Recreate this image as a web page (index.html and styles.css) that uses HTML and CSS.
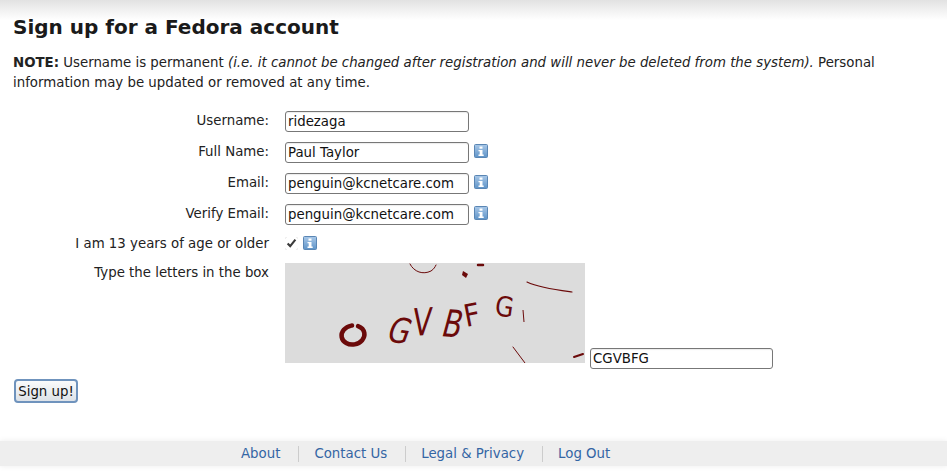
FILE: index.html
```html
<!DOCTYPE html>
<html lang="en">
<head>
<meta charset="utf-8">
<title>Sign up for a Fedora account</title>
<link rel="stylesheet" href="styles.css">
</head>
<body>
<svg width="0" height="0" class="defs" aria-hidden="true">
  <defs>
    <linearGradient id="ig" x1="0" y1="0" x2="0" y2="1">
      <stop offset="0" stop-color="#a9c8e8"/>
      <stop offset="1" stop-color="#5f94c8"/>
    </linearGradient>
    <symbol id="info" viewBox="0 0 14 14">
      <rect x="0.5" y="0.5" width="13" height="13" rx="1" fill="url(#ig)" stroke="#5a86b4"/>
      <rect x="5.5" y="2.5" width="3" height="2.2" fill="#fff"/>
      <path d="M4.5 6h4v4.6h1.2v1.4H4.5v-1.4h1.2V7.3H4.5z" fill="#fff"/>
    </symbol>
  </defs>
</svg>
<main class="content">
  <h1 class="title">Sign up for a Fedora account</h1>
  <p class="note"><strong>NOTE:</strong> Username is permanent <em>(i.e. it cannot be changed after registration and will never be deleted from the system).</em> Personal information may be updated or removed at any time.</p>
  <form class="form">
    <label class="label">Username:</label>
    <div class="field"><input class="text" type="text" value="ridezaga"></div>
    <label class="label">Full Name:</label>
    <div class="field"><input class="text" type="text" value="Paul Taylor"><svg class="info"><use href="#info"/></svg></div>
    <label class="label">Email:</label>
    <div class="field"><input class="text" type="text" value="penguin@kcnetcare.com"><svg class="info"><use href="#info"/></svg></div>
    <label class="label">Verify Email:</label>
    <div class="field"><input class="text" type="text" value="penguin@kcnetcare.com"><svg class="info"><use href="#info"/></svg></div>
    <label class="label label-check">I am 13 years of age or older</label>
    <div class="field field-check"><input class="check" type="checkbox" checked><svg class="info"><use href="#info"/></svg></div>
    <label class="label label-captcha">Type the letters in the box</label>
    <div class="field field-captcha">
      <svg class="captcha" width="300" height="100" viewBox="0 0 300 100">
        <rect width="300" height="100" fill="#dcdcdc"/>
        <g fill="none" stroke="#6b0a0a" stroke-linecap="round">
          <path d="M125 1C129 9 138 12 146 8 149 6 150 4 151 2" stroke-width="1"/>
          <path d="M242 19C255 25 272 27 287 29" stroke-width="1.2"/>
          <path d="M228 84L240 100" stroke-width="1"/>
          <path d="M289 94L298 91" stroke-width="2"/>
          <path d="M193 2H198" stroke-width="2.5"/>
          <ellipse cx="68" cy="72" rx="11.500" ry="9.500" stroke-width="4.500" stroke-dasharray="50 6" transform="rotate(-10 68 72)"/>
        </g>
        <path d="M178 8L183 11 181 15 177 12Z" fill="#6b0a0a"/>
        <g class="captcha-letters">
          <text class="cl" transform="translate(100 78) rotate(8) skewX(-12) scale(1 1.25)">G</text>
          <text class="cl cl-v" transform="translate(127 73) rotate(-4) skewX(-8) scale(1 1.35)">V</text>
          <text class="cl" transform="translate(155 73) rotate(5) skewX(-10) scale(1 1.35)">B</text>
          <text class="cl" transform="translate(181 64) rotate(-11) scale(1 1.1)">F</text>
          <text class="cl cl-g" transform="translate(209 52) rotate(8) scale(1 1.15)">G</text>
        </g>
        <path d="M238 47L239 59" fill="none" stroke="#6b0a0a"/>
      </svg>
      <input class="text text-captcha" type="text" value="CGVBFG">
    </div>
  </form>
  <button class="submit" type="button">Sign up!</button>
</main>
<footer class="footer">
  <nav class="links">
    <a href="#">About</a>
    <a href="#">Contact Us</a>
    <a href="#">Legal &amp; Privacy</a>
    <a href="#">Log Out</a>
  </nav>
</footer>
</body>
</html>
```
FILE: styles.css
```css
html, body {
  margin: 0;
  padding: 0;
  height: 474px;
  overflow: hidden;
  background: #fff;
}
body {
  font-family: "DejaVu Sans", sans-serif;
  font-size: 13.33px;
  color: #222;
  background: linear-gradient(to bottom, #e2e2e2 0, #fff 20px) no-repeat;
}
.defs { display: block; height: 0; }
.content { padding: 15px 13px 0; height: 426px; box-sizing: border-box; }
.title {
  margin: 0;
  font-size: 20px;
  line-height: 24px;
  font-weight: bold;
  color: #1a1a1a;
}
.note {
  margin: 14px 0 0;
  line-height: 20px;
  font-size: 13.33px;
}
.form {
  display: grid;
  grid-template-columns: 256px 1fr;
  column-gap: 16px;
  row-gap: 10px;
  margin-top: 18px;
  align-items: start;
}
.label { text-align: right; line-height: 19px; padding-right: 0; color: #222; }
.field { display: flex; align-items: flex-start; height: 21px; }
.text {
  box-sizing: border-box;
  width: 184px;
  height: 21px;
  margin: 0;
  padding: 1px 2px;
  border: 1px solid #777;
  border-radius: 3px;
  font-family: "DejaVu Sans", sans-serif;
  font-size: 13.33px;
  color: #111;
  background: #fff;
  box-shadow: inset 0 1px 1px rgba(0,0,0,.08);
}
.info { width: 14px; height: 14px; margin: 2px 0 0 5px; flex: none; }
.field-check { height: 14px; align-items: center; margin-top: 1px; }
.label-check { line-height: 18px; margin-top: 0; }
.check { width: 13px; height: 13px; margin: 0; accent-color: #fff; }
.field-check .info { margin: 0 0 0 5px; }
.label-captcha { margin-top: -1px; }
.field-captcha { height: auto; align-items: flex-end; margin-top: 0; margin-bottom: 0; }
.field-check + .label-captcha, .field-captcha { margin-top: 0; }
.captcha { display: block; flex: none; }
.text-captcha { width: 183px; margin: 0 0 -6px 5px; }
.cl {
  font-family: "DejaVu Sans", sans-serif;
  font-size: 28px;
  fill: #6b0a0a;
}
.cl-g { font-size: 24px; font-weight: normal; }
.submit {
  display: block;
  box-sizing: border-box;
  width: 64px;
  height: 24px;
  margin: 16px 0 0 1px;
  padding: 0;
  border: 2px solid #6f93bd;
  border-radius: 4px;
  background: linear-gradient(to bottom, #fbfbfb, #dde2e8);
  font-family: "DejaVu Sans", sans-serif;
  font-size: 13.33px;
  color: #111;
}
.footer {
  margin-top: 15px;
  height: 25px;
  background: #eee;
  box-shadow: 0 0 6px rgba(0,0,0,.08);
}
.links {
  display: flex;
  align-items: center;
  height: 25px;
  padding-left: 241px;
}
.links a {
  color: #3465a4;
  text-decoration: none;
  font-size: 13.33px;
  line-height: 16px;
  padding-right: 18px;
  margin-right: 15px;
  border-right: 1px solid #ccc;
}
.links a:last-child { border-right: 0; padding-right: 0; margin-right: 0; }
```
